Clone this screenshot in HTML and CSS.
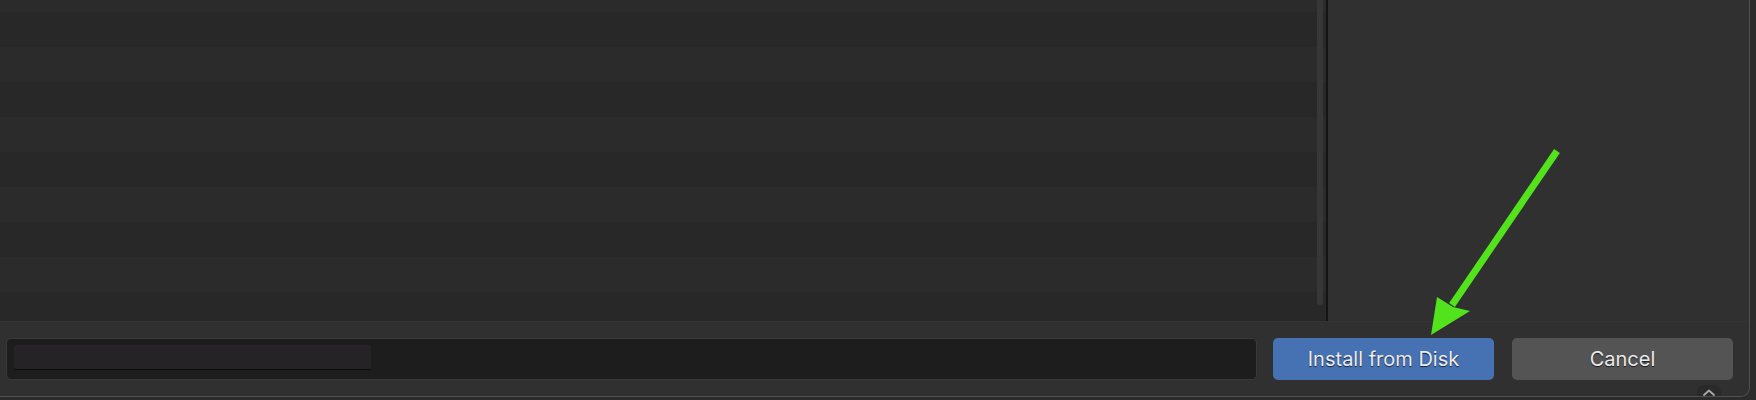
FILE: index.html
```html
<!DOCTYPE html>
<html lang="en">
<head>
<meta charset="utf-8">
<title>File Browser</title>
<link rel="stylesheet" href="styles.css">
</head>
<body>
<div class="screen">
  <div class="dialog">
    <div class="main">
      <div class="list">
        <div class="rows">
          <div class="row odd"></div>
          <div class="row"></div>
          <div class="row odd"></div>
          <div class="row"></div>
          <div class="row odd"></div>
          <div class="row"></div>
          <div class="row odd"></div>
          <div class="row"></div>
          <div class="row odd"></div>
          <div class="row"></div>
        </div>
        <div class="scrollbar"></div>
      </div>
      <div class="divider"></div>
      <div class="sidebar"></div>
    </div>
    <div class="footer">
      <div class="field"><div class="redacted"></div></div>
      <button class="btn primary">Install from Disk</button>
      <button class="btn">Cancel</button>
      <div class="toggle">
        <svg width="14" height="8" viewBox="0 0 14 8"><path d="M2 7 L7 2.5 L12 7" fill="none" stroke="#a8a8a8" stroke-width="1.8" stroke-linecap="round" stroke-linejoin="round"/></svg>
      </div>
    </div>
  </div>
  <svg class="annotation" width="1756" height="400" viewBox="0 0 1756 400">
    <line x1="1557" y1="151" x2="1452" y2="305" stroke="#52e31c" stroke-width="7"/>
    <polygon points="1431,335 1437,297 1453,307 1470,311" fill="#52e31c"/>
  </svg>
</div>
</body>
</html>
```
FILE: styles.css
```css
html, body {
  margin: 0;
  padding: 0;
}
body {
  background: #2c2c2c;
  font-family: Inter, "Noto Sans", sans-serif;
  overflow: hidden;
}
.screen {
  position: relative;
  width: 1756px;
  height: 400px;
  overflow: hidden;
  background: #2c2c2c;
}
.dialog {
  width: 1749px;
  height: 396px;
  background: #303030;
  border-right: 1px solid #505050;
  border-bottom: 1px solid #505050;
  border-bottom-right-radius: 9px;
  display: flex;
  flex-direction: column;
  overflow: hidden;
}
.main {
  height: 321px;
  display: flex;
  flex: none;
}
.list {
  width: 1326px;
  position: relative;
  overflow: hidden;
  background: #282828;
}
.rows {
  margin-top: -23px;
}
.row {
  height: 35px;
  background: #282828;
}
.row.odd {
  background: #2b2b2b;
}
.scrollbar {
  position: absolute;
  left: 1317px;
  top: 0;
  width: 6px;
  height: 305px;
  background: #373737;
  border-radius: 0 0 3px 3px;
}
.divider {
  width: 2px;
  background: #141414;
}
.sidebar {
  flex: 1;
  background: #303030;
}
.footer {
  position: relative;
  flex: 1;
  display: flex;
  align-items: flex-start;
  padding: 16px 0 0 6px;
  gap: 16px;
  border-top: 1px solid #333;
}
.field {
  width: 1251px;
  height: 42px;
  background: #1d1d1d;
  border: 1px solid #393939;
  border-radius: 5px;
  padding: 6px 0 0 7px;
  box-sizing: border-box;
}
.redacted {
  width: 357px;
  height: 25px;
  background: #252325;
  border-radius: 2px;
  border-bottom: 1px solid #0c0c0c;
  box-sizing: border-box;
}
.btn {
  width: 221px;
  height: 42px;
  border: none;
  border-radius: 5px;
  background: #545454;
  color: #ececec;
  font-family: Inter, "Noto Sans", sans-serif;
  font-size: 20px;
  text-shadow: 0 1px 1px rgba(0,0,0,0.7);
  padding: 0;
}
.btn.primary {
  background: #4672b4;
}
.btn + .btn {
  margin-left: 2px;
}
.toggle {
  position: absolute;
  left: 1697px;
  top: 63px;
  width: 24px;
  height: 14px;
  background: #2a2a2a;
  border-radius: 7px 7px 0 0;
  display: flex;
  align-items: center;
  justify-content: center;
}
.annotation {
  position: absolute;
  left: 0;
  top: 0;
  pointer-events: none;
}
```
